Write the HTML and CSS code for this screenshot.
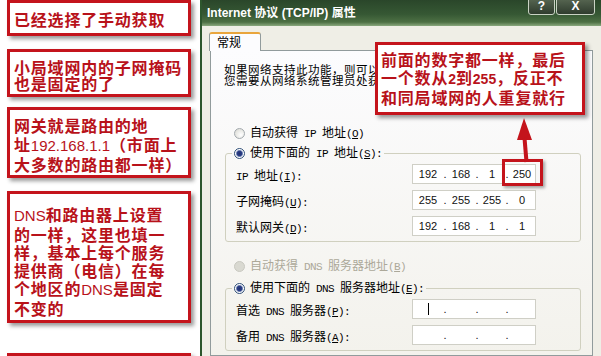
FILE: index.html
```html
<!DOCTYPE html>
<html lang="zh">
<head>
<meta charset="utf-8">
<title>TCP/IP 属性</title>
<link rel="stylesheet" href="styles.css">
</head>
<body>
<div class="page">
  <div class="notes">
    <div class="note n1">已经选择了手动获取</div>
    <div class="note n2">小局域网内的子网掩码<br>也是固定的了</div>
    <div class="note n3">网关就是路由的地<br>址<span class="lat">192.168.1.1</span>（市面上<br>大多数的路由都一样）</div>
    <div class="note n4"><span class="lat">DNS</span>和路由器上设置<br>的一样，这里也填一<br>样，基本上每个服务<br>提供商（电信）在每<br>个地区的<span class="lat">DNS</span>是固定<br>不变的</div>
    <div class="note n5"></div>
  </div>

  <div class="dialog">
    <div class="titlebar">
      <span class="title">Internet 协议 (TCP/IP) 属性</span>
      <div class="tbtns">
        <span class="tbtn help">?</span>
        <span class="tbtn close">X</span>
      </div>
    </div>
    <div class="dbody">
      <div class="tabs"><div class="tab">常规</div></div>
      <div class="panel">
        <p class="intro"><span class="ln">如果网络支持此功能，则可以获取自动指派的<span class="m"> IP </span>设置。否则，</span><span class="ln">您需要从网络系统管理员处获得适当的<span class="m"> IP </span>设置。</span></p>

        <div class="opt first"><span class="rb off"></span><span class="txt">自动获得<span class="m"> IP </span>地址<span class="m">(<u>O</u>)</span></span></div>

        <fieldset class="grp g1">
          <legend><span class="opt"><span class="rb on"></span><span class="txt">使用下面的<span class="m"> IP </span>地址<span class="m">(<u>S</u>):</span></span></span></legend>
          <div class="rows">
            <div class="row">
              <span class="lbl"><span class="m">IP </span>地址<span class="m">(<u>I</u>):</span></span>
              <div class="ipf"><span class="s1">192</span><span class="d">.</span><span class="s2">168</span><span class="d">.</span><span class="s3">1</span><span class="d">.</span><span class="s4">250</span><span class="hl"></span></div>
            </div>
            <div class="row">
              <span class="lbl">子网掩码<span class="m">(<u>U</u>):</span></span>
              <div class="ipf"><span class="s1">255</span><span class="d">.</span><span class="s2">255</span><span class="d">.</span><span class="s3">255</span><span class="d">.</span><span class="s4">0</span></div>
            </div>
            <div class="row">
              <span class="lbl">默认网关<span class="m">(<u>D</u>):</span></span>
              <div class="ipf"><span class="s1">192</span><span class="d">.</span><span class="s2">168</span><span class="d">.</span><span class="s3">1</span><span class="d">.</span><span class="s4">1</span></div>
            </div>
          </div>
        </fieldset>

        <div class="opt dis second"><span class="rb disr"></span><span class="txt">自动获得<span class="m"> DNS </span>服务器地址<span class="m">(<u>B</u>)</span></span></div>

        <fieldset class="grp g2">
          <legend><span class="opt"><span class="rb on"></span><span class="txt">使用下面的<span class="m"> DNS </span>服务器地址<span class="m">(<u>E</u>):</span></span></span></legend>
          <div class="rows">
            <div class="row">
              <span class="lbl">首选<span class="m"> DNS </span>服务器<span class="m">(<u>P</u>):</span></span>
              <div class="ipf"><span class="s1"><span class="caret"></span></span><span class="d">.</span><span class="s2"></span><span class="d">.</span><span class="s3"></span><span class="d">.</span><span class="s4"></span></div>
            </div>
            <div class="row">
              <span class="lbl">备用<span class="m"> DNS </span>服务器<span class="m">(<u>A</u>):</span></span>
              <div class="ipf"><span class="s1"></span><span class="d">.</span><span class="s2"></span><span class="d">.</span><span class="s3"></span><span class="d">.</span><span class="s4"></span></div>
            </div>
          </div>
        </fieldset>
      </div>
    </div>

    <div class="callout">前面的数字都一样，最后<br>一个数从<span class="lat2">2</span>到<span class="lat2">255</span>，反正不<br>和同局域网的人重复就行</div>

    <svg class="arrow" width="28" height="54" viewBox="0 0 28 54">
      <polygon points="16,6 9,28 24,28" fill="#c4141c"/>
      <line x1="16.5" y1="26" x2="18.5" y2="50" stroke="#c4141c" stroke-width="4"/>
    </svg>
  </div>
</div>
</body>
</html>
```

FILE: styles.css
```css
* { box-sizing: border-box; }
html, body { margin: 0; padding: 0; background: #fff; }
body {
  width: 601px;
  height: 356px;
  overflow: hidden;
  font-family: "Noto Sans CJK SC", sans-serif;
}
.page { display: flex; height: 356px; overflow: hidden; }

/* ---------- left annotation column ---------- */
.notes {
  width: 200px;
  flex: none;
  display: flex;
  flex-direction: column;
  padding-left: 7px;
}
.note {
  flex: none;
  width: 184px;
  border: 3px solid #c4141c;
  background: #fff;
  box-shadow: 3px 3px 4px rgba(0, 0, 0, 0.4);
  color: #b8121a;
  font-weight: 700;
  font-size: 16px;
  letter-spacing: 0.8px;
  white-space: nowrap;
  padding-left: 4px;
}
.n1 { line-height: 20px; padding-top: 6px; padding-bottom: 4px; }
.n2 { margin-top: 13px; line-height: 16px; padding-top: 7px; padding-bottom: 3px; }
.n3 { margin-top: 10px; line-height: 19px; padding-top: 6px; padding-bottom: 1px; }
.n4 { margin-top: 13px; line-height: 18px; padding-top: 11px; padding-bottom: 3px; }
.n5 { margin-top: 30px; height: 40px; }
.lat {
  font-family: "Liberation Sans", sans-serif;
  font-weight: 400;
  font-size: 15px;
  letter-spacing: 0;
}

/* ---------- dialog ---------- */
.dialog {
  position: relative;
  flex: 1;
  height: 356px;
  overflow: hidden;
  background: #efeee6;
  border-left: 2px solid #2d562d;
}
.titlebar {
  height: 26px;
  display: flex;
  justify-content: space-between;
  align-items: flex-start;
  padding-left: 5px;
  background: linear-gradient(#2a462a 0%, #365834 55%, #4d7044 85%, #8aa87e 100%);
}
.title {
  color: #fff;
  font: bold 12px "Liberation Sans", "Noto Sans CJK SC", sans-serif;
  line-height: 26px;
}
.tbtns { display: flex; margin-top: -8px; margin-right: 6px; }
.tbtn {
  height: 23px;
  border: 1px solid #c9d2c4;
  border-radius: 3px;
  background: linear-gradient(#66765f, #2f3c2e);
  color: #fff;
  font: bold 12px "Liberation Sans", sans-serif;
  line-height: 13px;
  display: flex;
  align-items: flex-end;
  justify-content: center;
  padding-bottom: 1px;
}
.help { width: 27px; }
.close { width: 39px; margin-left: 1px; }

.dbody { padding: 6px 8px 0 8px; }
.tabs { display: flex; }
.tab {
  position: relative;
  z-index: 1;
  margin-left: -1px;
  margin-bottom: -1px;
  width: 52px;
  height: 19px;
  border: 1px solid #919b9c;
  border-top: 2px solid #e9a53c;
  border-bottom: none;
  border-radius: 3px 3px 0 0;
  background: #fcfcfe;
  font-size: 12px;
  line-height: 16px;
  padding-left: 7px;
}
.panel {
  width: 383px;
  height: 306px;
  border: 1px solid #919b9c;
  background: linear-gradient(#fcfcfe, #f3f2ec);
  padding: 13px 0 0 13px;
  overflow: hidden;
  font-size: 12px;
  color: #000;
}
.intro {
  margin: 0;
  display: flex;
  flex-direction: column;
}
.ln {
  display: block;
  height: 11px;
  line-height: 11px;
  font-size: 11.5px;
  letter-spacing: 0.5px;
  white-space: nowrap;
}
.m {
  font-family: "Liberation Mono", monospace;
  font-size: 11px;
  letter-spacing: -0.6px;
}
u { text-decoration-thickness: 1px; text-underline-offset: 1px; }

.opt {
  display: flex;
  align-items: center;
  height: 16px;
  line-height: 16px;
  white-space: nowrap;
}
.txt { white-space: pre; }
.first { margin-top: 39px; margin-left: 10px; }
.second { margin-top: 16px; margin-left: 10px; }
.dis { color: #aca899; }
.rb {
  flex: none;
  width: 11px;
  height: 11px;
  border-radius: 50%;
  margin-right: 5px;
}
.rb.off {
  border: 1px solid #a3a9ae;
  background: radial-gradient(circle at 65% 65%, #ffffff, #d6d6cf);
}
.rb.on {
  border: 1px solid #2f4f78;
  background: radial-gradient(circle, #202f70 0, #2b3f86 2.4px, #8796c0 3.2px, #ffffff 3.9px);
}
.rb.disr {
  border: 1px solid #c9c9c1;
  background: #d9d9d1;
}

.grp {
  width: 356px;
  margin: 4px 0 0 1px;
  border: 1px solid #d0d0bf;
  border-radius: 3px;
  padding: 3px 0 5px 6px;
  min-width: 0;
}
.g2 { margin-top: 6px; padding-top: 3px; }
.grp legend { padding: 0 2px; height: 16px; }
.rows { display: flex; flex-direction: column; gap: 6px; }
.row { display: flex; align-items: center; height: 20px; }
.lbl { width: 180px; padding-left: 4px; white-space: pre; flex: none; }

.ipf {
  position: relative;
  width: 124px;
  height: 20px;
  border: 1px solid #cfcfc6;
  background: #fff;
  display: flex;
  font: 11px "Liberation Sans", sans-serif;
  line-height: 18px;
  color: #111;
}
.ipf span { text-align: center; }
.s1 { width: 30px; }
.s2 { width: 28px; }
.s3 { width: 26px; }
.s4 { flex: 1; }
.d { width: 4px; }
.caret {
  display: inline-block;
  width: 1px;
  height: 12px;
  background: #000;
  vertical-align: -2px;
}
.hl {
  position: absolute;
  left: 89px;
  top: -6px;
  width: 41px;
  height: 27px;
  border: 3px solid #c4141c;
  box-shadow: 2px 2px 3px rgba(0, 0, 0, 0.35);
}

.callout {
  position: absolute;
  left: 173px;
  top: 42px;
  width: 210px;
  height: 73px;
  border: 3px solid #c4141c;
  background: #fff;
  box-shadow: 3px 3px 4px rgba(0, 0, 0, 0.4);
  color: #b8121a;
  font-weight: 700;
  font-size: 16px;
  letter-spacing: 0.8px;
  line-height: 18px;
  padding: 5px 3px;
  white-space: nowrap;
}
.lat2 {
  font-family: "Liberation Sans", sans-serif;
  font-weight: 700;
  font-size: 14px;
  letter-spacing: 0;
}
.arrow {
  position: absolute;
  left: 306px;
  top: 112px;
}
```
